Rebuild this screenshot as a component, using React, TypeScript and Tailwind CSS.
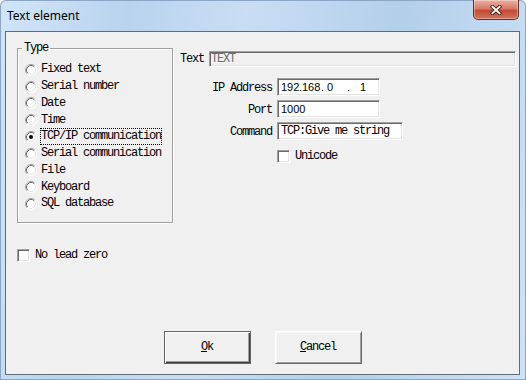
const mono = "font-['Liberation_Mono',monospace] text-[12px] leading-[15px] tracking-[-1.2px]";
const sans = "font-['Liberation_Sans',sans-serif] text-[11px] leading-[14px] text-black";
const sunken =
  "border border-t-[#a0a0a0] border-l-[#a0a0a0] border-r-white border-b-white shadow-[inset_1px_1px_0_#696969,inset_-1px_-1px_0_#e3e3e3]";

const types = [
  "Fixed text",
  "Serial number",
  "Date",
  "Time",
  "TCP/IP communication",
  "Serial communication",
  "File",
  "Keyboard",
  "SQL database",
];

function Radio({ checked }: { checked?: boolean }) {
  return (
    <svg width="12" height="12" viewBox="0 0 12 12" className="shrink-0">
      <circle cx="6" cy="6" r="5.5" fill="#fff" />
      <path d="M2.11 9.89A5.5 5.5 0 0 1 9.89 2.11" fill="none" stroke="#a0a0a0" />
      <path d="M9.89 2.11A5.5 5.5 0 0 1 2.11 9.89" fill="none" stroke="#fff" />
      <path d="M2.82 9.18A4.5 4.5 0 0 1 9.18 2.82" fill="none" stroke="#696969" />
      <path d="M9.18 2.82A4.5 4.5 0 0 1 2.82 9.18" fill="none" stroke="#e3e3e3" />
      {checked && <circle cx="6" cy="6" r="2" fill="#000" />}
    </svg>
  );
}

function CheckBox() {
  return <span className={`block h-[13px] w-[13px] shrink-0 bg-white ${sunken}`} />;
}

function Row({
  label,
  children,
  className = "",
  wide = false,
}: {
  label: string;
  children: React.ReactNode;
  className?: string;
  wide?: boolean;
}) {
  return (
    <div className={`flex items-center ${className}`}>
      <span className={`w-[92px] pt-[2px] text-right text-black ${mono}`}>{label}</span>
      <div
        className={`ml-[5px] flex h-[18px] items-center overflow-hidden bg-white pl-[3px] ${wide ? "w-[126px]" : "w-[103px]"} ${sunken}`}
      >
        {children}
      </div>
    </div>
  );
}

export default function App() {
  return (
    <div className="flex h-[380px] w-[526px] flex-col overflow-hidden rounded-t-[6px] bg-[linear-gradient(100deg,#d2e5f8_0%,#b9d3ee_22%,#c9def4_42%,#b4cfeb_68%,#cfe2f6_100%)] shadow-[inset_0_0_0_1px_#8ba6c4]">
      {/* title bar */}
      <div className="flex h-[31px] shrink-0 items-start justify-between">
        <span className="ml-[7px] mt-[7px] font-['Noto_Sans',sans-serif] text-[12px] leading-[17px] text-black">
          Text element
        </span>
        <div className="mr-[7px] flex h-[20px] w-[46px] items-center justify-center rounded-b-[5px] border border-t-0 border-[#6b2e26] bg-[linear-gradient(180deg,#eab1a4_0%,#d87a68_45%,#c44a35_55%,#d2735d_100%)] shadow-[inset_0_0_0_1px_rgba(255,255,255,0.35)]">
          <svg width="12" height="10" viewBox="0 0 12 10">
            <path d="M2.5 1.8L9.5 8.2M9.5 1.8L2.5 8.2" stroke="#4a1a14" strokeWidth="3.8" strokeLinecap="square" />
            <path d="M2.5 1.8L9.5 8.2M9.5 1.8L2.5 8.2" stroke="#fff" strokeWidth="2" strokeLinecap="square" />
          </svg>
        </div>
      </div>

      {/* client area */}
      <div className="mb-[5px] ml-[5px] mr-[6px] flex h-[344px] flex-col border border-[#5f6b78] bg-[#f0f0f0]">
        <div className="ml-[11px] mt-[16px] flex items-start">
          {/* group box */}
          <div className="flex w-[156px] flex-col border border-[#a0a0a0] pb-[9.5px] pl-[7px] shadow-[inset_1px_1px_0_#fff,1px_1px_0_#fff]">
            <span className={`-ml-[3px] -mt-[8px] w-fit bg-[#f0f0f0] px-[2px] text-black ${mono}`}>Type</span>
            <div className="mt-[5.6px] flex flex-col">
              {types.map((t) => {
                const sel = t === "TCP/IP communication";
                return (
                  <div key={t} className="flex h-[16.75px] items-center">
                    <Radio checked={sel} />
                    <span
                      className={`ml-[3px] whitespace-pre border text-black ${sel ? "border-dotted border-black" : "border-transparent"} ${mono}`}
                    >
                      {t}
                    </span>
                  </div>
                );
              })}
            </div>
          </div>

          {/* fields */}
          <div className="ml-[7px] mt-[3px] flex flex-1 flex-col pr-[3px]">
            <div className="flex h-[16px] items-center">
              <span className={`w-[29px] text-black ${mono}`}>Text</span>
              <div className={`flex h-[16px] flex-1 items-center bg-[#f0f0f0] pl-[1px] ${sunken}`}>
                <span className={`text-[#6d6d6d] ${mono}`}>TEXT</span>
              </div>
            </div>
            <Row label="IP Address" className="mt-[11px]">
              <div className={`flex ${sans}`}>
                <span className="w-[18px] shrink-0">192</span>
                <span className="w-[3px] shrink-0">.</span>
                <span className="w-[19px] shrink-0">168</span>
                <span className="w-[6px] shrink-0">.</span>
                <span className="w-[20px] shrink-0">0</span>
                <span className="w-[13px] shrink-0">.</span>
                <span className="shrink-0">1</span>
              </div>
            </Row>
            <Row label="Port" className="mt-[4px]">
              <span className={sans}>1000</span>
            </Row>
            <Row label="Command" className="mt-[4px]" wide>
              <span className={`whitespace-pre text-black ${mono}`}>TCP:Give me string</span>
            </Row>
            <div className="ml-[97px] mt-[9px] flex items-center">
              <CheckBox />
              <span className={`ml-[5px] text-black ${mono}`}>Unicode</span>
            </div>
          </div>
        </div>

        <div className="ml-[11px] mt-[25px] flex items-center">
          <CheckBox />
          <span className={`ml-[5px] whitespace-pre text-black ${mono}`}>No lead zero</span>
        </div>

        {/* buttons */}
        <div className="mb-[10px] mt-auto flex justify-center gap-[24px]">
          <button className="flex h-[33px] w-[87px] items-center justify-center border border-[#646464] bg-[#f0f0f0] shadow-[inset_1px_1px_0_#fff,inset_-1px_-1px_0_#404040,inset_-2px_-2px_0_#a0a0a0]">
            <span className={`text-black ${mono}`}>
              <u>O</u>k
            </span>
          </button>
          <button className="flex h-[33px] w-[87px] items-center justify-center border border-b-[#696969] border-l-white border-r-[#696969] border-t-white bg-[#f0f0f0] shadow-[inset_1px_1px_0_#f8f8f8,inset_-1px_-1px_0_#a0a0a0]">
            <span className={`text-black ${mono}`}>
              <u>C</u>ancel
            </span>
          </button>
        </div>
      </div>
    </div>
  );
}
